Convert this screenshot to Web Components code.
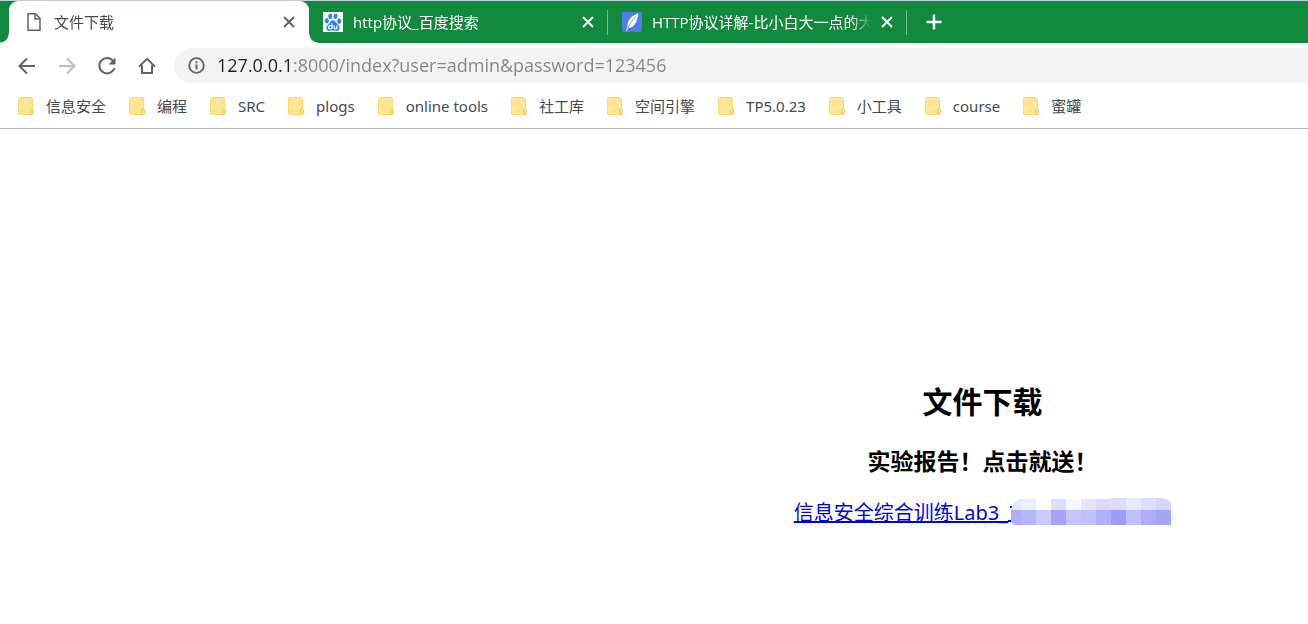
<!DOCTYPE html>
<html lang="zh-CN">
<head>
<meta charset="utf-8">
<meta name="viewport" content="width=device-width, initial-scale=1">
<title>文件下载</title>
<style>
  body { margin: 0; background: #fff; font-family: "Open Sans", "Noto Sans CJK SC", sans-serif; font-size: 15px; }
</style>
</head>
<body>
<browser-window>
  <tab-strip slot="tabs">
    <browser-tab active>
      <svg slot="icon" width="20" height="20" viewBox="0 0 20 20" fill="none" stroke="#5f6368" stroke-width="1.5" aria-hidden="true"><path d="M4 1.8H11.5L16 6.3V18.2H4Z"/><path d="M11 2V7H16"/></svg>
      文件下载
    </browser-tab>
    <browser-tab divided>
      <svg slot="icon" width="20" height="20" viewBox="0 0 20 20" aria-hidden="true"><path fill="#fff" d="M0 0H20V20H0Z"/><g fill="#2d83f5"><ellipse cx="3.8" cy="8.8" rx="2.1" ry="2.7" transform="rotate(-12 3.8 8.8)"/><ellipse cx="7.3" cy="4.3" rx="2" ry="2.8"/><ellipse cx="12.5" cy="4.3" rx="2" ry="2.8" transform="rotate(12 12.5 4.3)"/><ellipse cx="16.2" cy="9.2" rx="2.1" ry="2.7" transform="rotate(10 16.2 9.2)"/><path d="M10 8.3C12 8.3 12.6 10.4 14 11.8C15.6 13.2 17 14.3 16.6 16.4C16.2 18.6 14 19.1 12.2 18.8Q10 18.4 7.8 18.8C5.6 19.1 3.6 18.4 3.3 16.3C3 14.2 4.6 13.1 6 11.8C7.5 10.3 8 8.3 10 8.3Z"/></g><g fill="none" stroke="#fff" stroke-width="1.2"><path d="M9 11.5V17M9 14.2C7.8 13 5.6 13.4 5.6 15.3C5.6 17.2 7.8 17.5 9 16.2M11 13.4V15.6C11 17.3 14 17.3 14 15.6V13.4"/></g></svg>
      http协议_百度搜索
    </browser-tab>
    <browser-tab divided>
      <svg slot="icon" width="20" height="20" viewBox="0 0 20 20" aria-hidden="true"><rect width="20" height="20" rx="2" fill="#4e7de9"/><path fill="#fff" d="M16.3 1.5C11.5 2.6 7.3 6.3 6 10.5C5.3 12.8 5.5 14.3 5.2 15.6L4 18.4L5 18.7L6.3 16C11.8 15.8 15.4 10.3 16.3 1.5Z"/><path d="M6 16C8 11.6 10.5 7.8 13.8 4.6" stroke="#4e7de9" stroke-width=".8" fill="none"/></svg>
      HTTP协议详解-比小白大一点的大白
    </browser-tab>
  </tab-strip>
  <tool-bar slot="toolbar" url="127.0.0.1:8000/index?user=admin&amp;password=123456"></tool-bar>
  <bookmarks-bar slot="bookmarks">
    <bookmark-item>信息安全</bookmark-item>
    <bookmark-item>编程</bookmark-item>
    <bookmark-item>SRC</bookmark-item>
    <bookmark-item>plogs</bookmark-item>
    <bookmark-item>online tools</bookmark-item>
    <bookmark-item>社工库</bookmark-item>
    <bookmark-item>空间引擎</bookmark-item>
    <bookmark-item>TP5.0.23</bookmark-item>
    <bookmark-item>小工具</bookmark-item>
    <bookmark-item>course</bookmark-item>
    <bookmark-item>蜜罐</bookmark-item>
  </bookmarks-bar>
  <download-page></download-page>
</browser-window>

<script>
const define = (name, html, setup) => {
  const template = document.createElement('template');
  template.innerHTML = html;
  customElements.define(name, class extends HTMLElement {
    constructor() {
      super();
      this.attachShadow({ mode: 'open' }).append(template.content.cloneNode(true));
    }
    connectedCallback() { if (setup) setup(this, this.shadowRoot); }
  });
};

define('browser-window', `
  <style>
    :host { display: flex; flex-direction: column; border-top: 1px solid #c3cfdc; }
    header { border-bottom: 1px solid #b3b3b3; }
  </style>
  <header>
    <slot name="tabs"></slot>
    <slot name="toolbar"></slot>
    <slot name="bookmarks"></slot>
  </header>
  <slot></slot>`);

define('tab-strip', `
  <style>
    :host { display: flex; height: 42px; padding-left: 9px; background: #128a3e; overflow: hidden; }
    .add { display: grid; place-items: center; width: 28px; margin-left: 13px; padding: 0; border: 0; background: none; }
  </style>
  <slot></slot>
  <button class="add" type="button" aria-label="打开新的标签页">
    <svg width="16" height="16" viewBox="0 0 16 16" stroke="#fff" stroke-width="2.4"><path d="M8 .5V15.5M.5 8H15.5"/></svg>
  </button>`);

define('browser-tab', `
  <style>
    :host { display: flex; flex: 0 1 299px; min-width: 0; align-items: center; position: relative; box-sizing: border-box; padding: 0 12px 0 14px; color: #fff; }
    :host([active]) { flex-basis: 300px; padding-left: 15px; background: #fff; color: #45494d; border-radius: 9px 9px 0 0; }
    :host([active])::before, :host([active])::after { content: ""; position: absolute; bottom: 0; width: 9px; height: 9px; }
    :host([active])::before { right: 100%; background: radial-gradient(circle at 0 0, transparent 8px, #fff 9px); }
    :host([active])::after { left: 100%; background: radial-gradient(circle at 100% 0, transparent 8px, #fff 9px); }
    :host([divided])::after { content: ""; position: absolute; right: 0; top: 9px; width: 1px; height: 25px; background: #79b98f; }
    button { padding: 0; border: 0; background: none; color: inherit; font: inherit; text-align: left; }
    .tab { display: flex; flex: 1; min-width: 0; align-items: center; gap: 10px; }
    .icon { display: flex; flex: none; }
    .title { flex: 1; min-width: 0; overflow: hidden; white-space: nowrap; line-height: 24px; -webkit-mask-image: linear-gradient(to left, transparent, #000 20px); mask-image: linear-gradient(to left, transparent, #000 20px); }
    .close { display: grid; place-items: center; width: 16px; height: 16px; margin-left: 8px; }
    :host([active]) .close { color: #5f6368; }
  </style>
  <button class="tab" type="button"><span class="icon"><slot name="icon"></slot></span><span class="title"><slot></slot></span></button>
  <button class="close" type="button" aria-label="关闭">
    <svg width="12" height="12" viewBox="0 0 12 12" stroke="currentColor" stroke-width="1.9"><path d="M1 1L11 11M11 1L1 11"/></svg>
  </button>`);

define('tool-bar', `
  <style>
    :host { display: flex; align-items: center; padding: 5px 0 5px 7px; color: #5f6368; }
    button { display: grid; place-items: center; flex: none; width: 40px; height: 35px; padding: 0; border: 0; background: none; color: inherit; }
    button:disabled { color: #babcbe; }
    svg { fill: none; stroke: currentColor; stroke-width: 2; }
    .address { display: flex; flex: 1; align-items: center; gap: 12px; height: 35px; margin-left: 7px; padding-left: 14px; border-radius: 18px 0 0 18px; background: #f1f3f4; }
    .address svg { flex: none; }
    input { flex: 1; min-width: 0; height: 33px; padding: 0 0 2px; border: 0; outline: 0; font: inherit; font-size: 18px; color: transparent; background: linear-gradient(to right, #202124 var(--host-end), #80868b var(--host-end)); -webkit-background-clip: text; background-clip: text; }
  </style>
  <button type="button" aria-label="后退"><svg width="18" height="18" viewBox="0 0 18 18"><path d="M17 9H2M9 1.5L1.5 9L9 16.5"/></svg></button>
  <button type="button" aria-label="前进" disabled><svg width="18" height="18" viewBox="0 0 18 18"><path d="M1 9H16M9 1.5L16.5 9L9 16.5"/></svg></button>
  <button type="button" aria-label="重新加载"><svg width="20" height="20" viewBox="0 0 20 20"><path d="M16.2 5A7.7 7.7 0 1 0 17.4 12"/><path d="M18.5 1.5V8.5H11.5Z" fill="currentColor" stroke="none"/></svg></button>
  <button type="button" aria-label="主页"><svg width="18" height="18" viewBox="0 0 18 18"><path d="M1 9.6L9 1.9L17 9.6M4 8.2V16H14V8.2"/></svg></button>
  <div class="address">
    <svg width="17" height="17" viewBox="0 0 17 17" aria-hidden="true"><circle cx="8.500" cy="8.500" r="7.300" stroke-width="1.8"/><path d="M8.500 7.500V12.500M8.500 4.300V6.200"/></svg>
    <input type="text" aria-label="地址" spellcheck="false">
  </div>`, (host, root) => {
  const input = root.querySelector('input');
  const url = host.getAttribute('url');
  input.value = url;
  const context = document.createElement('canvas').getContext('2d');
  context.font = getComputedStyle(input).font;
  input.style.setProperty('--host-end', Math.round(context.measureText(url.split(':')[0]).width) + 'px');
});

define('bookmarks-bar', `
  <style>
    :host { display: flex; align-items: center; gap: 23px; height: 36px; padding: 0 18px 4px; overflow: hidden; font-family: "Noto Sans", "Noto Sans CJK SC", sans-serif; }
  </style>
  <slot></slot>`);

define('bookmark-item', `
  <style>
    :host { display: block; flex: none; }
    button { display: flex; align-items: center; gap: 12px; padding: 0; border: 0; background: none; color: #45494d; font: inherit; line-height: 24px; white-space: nowrap; }
  </style>
  <button type="button">
    <svg width="16" height="18" viewBox="0 0 16 18" aria-hidden="true"><rect x=".5" y=".5" width="14" height="17" rx="1.200" fill="#ffe694" stroke="#fadb6c"/><path d="M12.500 17.500V13.500Q12.500 11.800 14 11.800T15.500 13.500V16.500Q15.500 17.500 14.500 17.500Z" fill="#ffe082" stroke="#f2cd50"/></svg>
    <span><slot></slot></span>
  </button>`);

define('download-page', `
  <style>
    :host { display: grid; grid-template-columns: 1fr 1fr; column-gap: 6px; padding: 251px 0 80px; color: #000; font-family: "Noto Sans", "Noto Sans CJK SC", sans-serif; }
    section { grid-column: 2; text-align: center; }
    h2, h3, p { margin: 0; }
    h2 { font-size: 30px; line-height: 44px; }
    h3 { margin-top: 20px; font-size: 23px; line-height: 34px; }
    p { margin-top: 20px; font-size: 20px; line-height: 30px; }
    a { display: inline-flex; align-items: flex-start; color: #00e; text-decoration: underline; }
    svg { flex: none; margin-right: -5px; }
  </style>
  <section>
    <h2>文件下载</h2>
    <h3>实验报告！点击就送！</h3>
    <p><a href="#report">信息安全综合训练Lab3_<svg width="168" height="27" viewBox="-3 0 168 27" shape-rendering="crispEdges" aria-hidden="true"></svg></a></p>
  </section>`, (host, root) => {
  const rows = [
    { y: 0, height: 12, colors: ['#e8e8fc', '#eeeefe', '#ffffff', '#dddcfd', '#f7f8ff', '#e4e4fd', '#dbdafd', '#dddcfd', '#e9e8fd', '#dedefd', '#d6d5fc'] },
    { y: 12, height: 15, colors: ['#aeaef8', '#b5b7fa', '#cacaff', '#a7a3fa', '#c5c4fc', '#bfbffb', '#b0b0f8', '#9c9cf9', '#c2c0fb', '#aeadf9', '#a5a3fa'] }
  ];
  const cells = rows.map(({ y, height, colors }) => colors.map((color, i) => {
    const top = y === 0 && i < 7 ? 1 : y;
    return `<rect x="${i ? i * 15 - 5 : 0}" y="${top}" width="${i ? 15 : 10}" height="${height + y - top}" fill="${color}"/>`;
  }).join('')).join('');
  root.querySelector('svg').innerHTML =
    `<clipPath id="edge"><path d="M0 24V12Q2 1 14 0H150Q158 1 160 5V27H3Z"/></clipPath>
     <path d="M-1 9H2M-3 23H2" stroke="#00e" stroke-width="2"/>
     <path d="M160 12Q165 13 165 18Q165 24 160 26Z" fill="#f6f6ff"/><g clip-path="url(#edge)">${cells}</g>`;
});
</script>
</body>
</html>
